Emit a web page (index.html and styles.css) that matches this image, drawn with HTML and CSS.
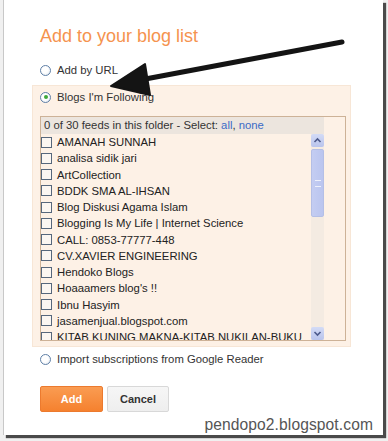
FILE: index.html
```html
<!DOCTYPE html>
<html lang="en">
<head>
    <meta charset="UTF-8">
    <meta name="viewport" content="width=device-width, initial-scale=1.0">
    <title>Add to your blog list</title>
    <link rel="stylesheet" href="styles.css">
</head>
<body>
    <div class="frame">
        <h1 class="title">Add to your blog list</h1>

        <label class="option">
            <span class="radio"></span>Add by URL
        </label>

        <div class="panel">
            <label class="option">
                <span class="radio checked"></span>Blogs I'm Following
            </label>

            <div class="listbox">
                <div class="list-head">0 of 30 feeds in this folder - Select: <a href="#">all</a>, <a href="#">none</a></div>
                <div class="list-body">
                    <ul class="feeds">
                        <li><span class="check"></span>AMANAH SUNNAH</li>
                        <li><span class="check"></span>analisa sidik jari</li>
                        <li><span class="check"></span>ArtCollection</li>
                        <li><span class="check"></span>BDDK SMA AL-IHSAN</li>
                        <li><span class="check"></span>Blog Diskusi Agama Islam</li>
                        <li><span class="check"></span>Blogging Is My Life | Internet Science</li>
                        <li><span class="check"></span>CALL: 0853-77777-448</li>
                        <li><span class="check"></span>CV.XAVIER ENGINEERING</li>
                        <li><span class="check"></span>Hendoko Blogs</li>
                        <li><span class="check"></span>Hoaaamers blog's !!</li>
                        <li><span class="check"></span>Ibnu Hasyim</li>
                        <li><span class="check"></span>jasamenjual.blogspot.com</li>
                        <li><span class="check"></span>KITAB KUNING MAKNA-KITAB NUKILAN-BUKU</li>
                    </ul>
                    <div class="scrollbar">
                        <div class="sb-btn">
                            <svg viewBox="0 0 13 13" width="13" height="13"><path d="M3.5 8 L6.5 5 L9.5 8" fill="none" stroke="#4d5a8c" stroke-width="1.6"/></svg>
                        </div>
                        <div class="sb-thumb"><span class="grip"></span></div>
                        <div class="sb-track"></div>
                        <div class="sb-btn">
                            <svg viewBox="0 0 13 13" width="13" height="13"><path d="M3.5 5 L6.5 8 L9.5 5" fill="none" stroke="#4d5a8c" stroke-width="1.6"/></svg>
                        </div>
                    </div>
                </div>
            </div>
        </div>

        <label class="option option-import">
            <span class="radio"></span>Import subscriptions from Google Reader
        </label>

        <div class="buttons">
            <button class="btn btn-add">Add</button>
            <button class="btn btn-cancel">Cancel</button>
        </div>

        <div class="watermark">pendopo2.blogspot.com</div>
    </div>

    <!-- arrow drawn over the dialog -->
    <svg class="arrow" viewBox="0 0 388 441" width="388" height="441">
        <line x1="342" y1="42" x2="140" y2="80" stroke="#141414" stroke-width="5" stroke-linecap="round"/>
        <polygon points="111,86 145,64 150,95" fill="#141414" stroke="#141414" stroke-width="2" stroke-linejoin="round"/>
    </svg>
</body>
</html>
```

FILE: styles.css
```css
body {
    margin: 0;
    position: relative;
    width: 388px;
    height: 441px;
    overflow: hidden;
    background-color: #f0f0f0;
    font-family: "Liberation Sans", Arial, sans-serif;
    font-size: 11.3px;
    color: #222;
}

.frame {
    position: relative;
    box-sizing: border-box;
    margin-left: 3px;
    width: 380px;
    height: 435px;
    padding: 25px 0 0 36px;
    background: #fff;
    border-left: 1px solid #c8c8c8;
    box-shadow: 3px 3px 1px #4a4a4a;
}

.title {
    margin: 0;
    font-size: 18px;
    line-height: 22px;
    font-weight: normal;
    color: #f5934f;
}

.option {
    display: flex;
    align-items: center;
    height: 16px;
    margin-top: 15px;
    color: #333;
}

.option-import {
    margin-top: 4px;
}

.radio {
    box-sizing: border-box;
    width: 11px;
    height: 11px;
    margin-right: 6px;
    border: 1px solid #5f7fa6;
    border-radius: 50%;
    background: radial-gradient(circle at 40% 40%, #fff 40%, #dfe6ee 100%);
    position: relative;
}

.radio.checked::after {
    content: "";
    position: absolute;
    left: 2.5px;
    top: 2.5px;
    width: 4px;
    height: 4px;
    border-radius: 50%;
    background: #3fa83a;
}

.panel {
    margin: 7px 0 0 -8px;
    width: 319px;
    box-sizing: border-box;
    padding: 3px 5px 5px 7px;
    background: #fdf1e6;
    border: 1px solid #f7e6d6;
}

.panel .option {
    margin-top: 0;
}

.listbox {
    margin-top: 11px;
    width: 306px;
    box-sizing: border-box;
    padding-right: 21px;
    border: 1px solid #cdb297;
    background: #fdf1e6;
}

.list-head {
    height: 17px;
    line-height: 16px;
    padding-left: 3px;
    background: #ece5de;
    color: #333;
}

.list-head a {
    color: #3b6bc6;
    text-decoration: none;
}

.list-body {
    display: flex;
    height: 206px;
    overflow: hidden;
}

.feeds {
    flex: 1;
    margin: 0;
    padding: 0;
    list-style: none;
    overflow: hidden;
}

.feeds li {
    display: flex;
    align-items: center;
    height: 16.25px;
    white-space: nowrap;
}

.check {
    flex: none;
    box-sizing: border-box;
    width: 11px;
    height: 11px;
    margin-right: 5px;
    border: 1px solid #56677c;
    background: #fbf6f1;
}

.scrollbar {
    display: flex;
    flex-direction: column;
    width: 13px;
    background: #f4ebe2;
}

.sb-btn {
    height: 13px;
    border-radius: 2px;
    background: linear-gradient(#d3dbf6, #b9c4ec);
}

.sb-btn svg {
    display: block;
}

.sb-thumb {
    margin-top: 2px;
    height: 68px;
    border-radius: 2px;
    box-sizing: border-box;
    border: 1px solid #b4bfe6;
    background: linear-gradient(90deg, #c4cdf2, #bac5ef);
    display: flex;
    align-items: center;
    justify-content: center;
}

.grip {
    width: 6px;
    height: 5px;
    border-top: 1px solid #eef1fc;
    border-bottom: 1px solid #eef1fc;
}

.sb-track {
    flex: 1;
}

.buttons {
    display: flex;
    gap: 4px;
    margin-top: 19px;
}

.btn {
    height: 26px;
    box-sizing: border-box;
    font-family: "Liberation Sans", Arial, sans-serif;
    font-size: 11px;
    font-weight: bold;
    border-radius: 2px;
    padding: 0;
}

.btn-add {
    width: 63px;
    color: #fff;
    border: 1px solid #ec7a2e;
    background: linear-gradient(#fa9c52, #f5812f);
}

.btn-cancel {
    width: 62px;
    color: #333;
    border: 1px solid #d8d8d8;
    background: linear-gradient(#f6f6f6, #eeeeee);
}

.watermark {
    position: absolute;
    right: 10px;
    bottom: 1px;
    font-size: 15.6px;
    letter-spacing: 0.1px;
    color: #555;
}

.arrow {
    position: absolute;
    top: 0;
    left: 0;
    pointer-events: none;
}
```
